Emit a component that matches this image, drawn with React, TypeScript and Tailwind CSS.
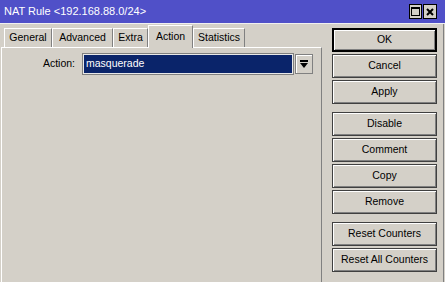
import React from "react";

const tabs = [
  { label: "General", w: "w-[48px]" },
  { label: "Advanced", w: "w-[61px]" },
  { label: "Extra", w: "w-[35px]" },
  { label: "Action", w: "w-[45px]", active: true },
  { label: "Statistics", w: "w-[52px]" },
];

const groups = [
  ["OK", "Cancel", "Apply"],
  ["Disable", "Comment", "Copy", "Remove"],
  ["Reset Counters", "Reset All Counters"],
];

function WinButton({ label }: { label: string }) {
  const isDefault = label === "OK";
  return (
    <button
      type="button"
      className={
        isDefault
          ? "flex h-[24px] w-[105px] items-center justify-center border-2 border-black bg-[#d4d0c8] text-[10.5px] text-black shadow-[inset_1px_1px_0_#ffffff,inset_-1px_-1px_0_#808080]"
          : "flex h-[24px] w-[105px] items-center justify-center border border-[#404040] bg-[#d4d0c8] text-[10.5px] text-black shadow-[inset_1px_1px_0_#ffffff,inset_-1px_-1px_0_#808080]"
      }
    >
      {label}
    </button>
  );
}

export default function App() {
  return (
    <div
      className="flex h-[282px] w-[445px] flex-col overflow-hidden bg-[#d4d0c8] text-black"
      style={{ fontFamily: '"Liberation Sans", Arial, sans-serif' }}
    >
      {/* title bar */}
      <div className="flex h-[23px] shrink-0 items-center justify-between bg-[#5050c8] pl-[4px] pr-[8px]">
        <span className="text-[11px] text-white">NAT Rule &lt;192.168.88.0/24&gt;</span>
        <div className="flex gap-[1px]">
          <div className="flex h-[15px] w-[13px] items-center justify-center border border-black bg-[#d4d0c8]">
            <div className="h-[9px] w-[9px] border border-black border-t-2" />
          </div>
          <div className="flex h-[15px] w-[14px] items-center justify-center border border-black bg-[#d4d0c8]">
            <svg width="8" height="8" viewBox="0 0 8 8">
              <path d="M1 1L7 7M7 1L1 7" stroke="#000" strokeWidth="2" />
            </svg>
          </div>
        </div>
      </div>

      <div className="flex flex-1 border-t border-[#f0f0f0]">
        {/* left: tabs + panel */}
        <div className="ml-[1px] flex w-[321px] flex-col">
          <div className="flex h-[23px] items-end pl-[3px]">
            {tabs.map((t) =>
              t.active ? (
                <div
                  key={t.label}
                  className={`relative z-10 -mb-px flex h-[23px] ${t.w} items-start justify-center border-l border-t border-r border-l-white border-t-white border-r-[#808080] bg-[#d4d0c8] pt-[3px] text-[10.5px]`}
                >
                  {t.label}
                </div>
              ) : (
                <div
                  key={t.label}
                  className={`flex h-[19px] ${t.w} items-center justify-center border-l border-t border-r border-l-white border-t-white border-r-[#808080] bg-[#d4d0c8] text-[10.5px]`}
                >
                  {t.label}
                </div>
              ),
            )}
          </div>
          <div className="flex-1 border-l border-t border-r border-l-white border-t-white border-r-[#808080]">
            <div className="mt-[6px] flex h-[20px] items-center">
              <span className="w-[75px] pr-[2px] text-right text-[10.5px]">Action:</span>
              <div className="ml-[6px] flex h-[20px] w-[210px] items-center border border-[#e8e8e8] bg-[#0a246a] pl-[2px] text-[10.5px] text-white shadow-[0_0_0_1px_#808080]">
                masquerade
              </div>
              <div className="ml-[2px] flex h-[20px] w-[18px] items-center justify-center border border-[#808080] bg-[#d4d0c8] shadow-[inset_1px_1px_0_#ffffff]">
                <svg width="8" height="8" viewBox="0 0 8 8">
                  <rect x="0" y="0" width="8" height="2" fill="#000" />
                  <path d="M0 3H8L4 8Z" fill="#000" />
                </svg>
              </div>
            </div>
          </div>
        </div>

        {/* right: buttons */}
        <div className="ml-[10px] mt-[4px] flex flex-col gap-[8px]">
          {groups.map((g, i) => (
            <div key={i} className="flex flex-col gap-[2px]">
              {g.map((b) => (
                <WinButton key={b} label={b} />
              ))}
            </div>
          ))}
        </div>
        <div className="ml-auto w-[2px] border-l border-[#808080]" />
      </div>
    </div>
  );
}
